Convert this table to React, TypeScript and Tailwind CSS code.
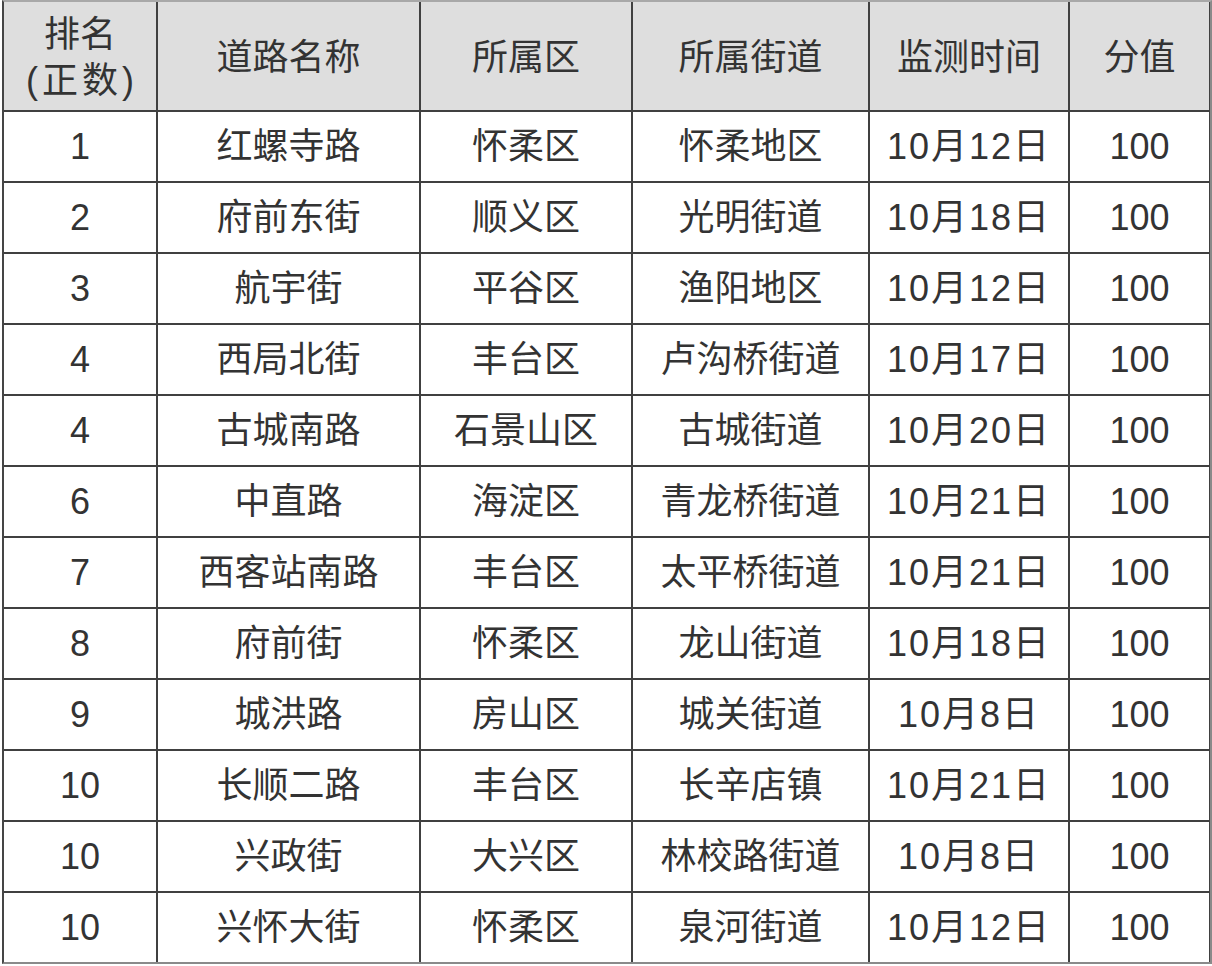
import React from "react";

const rows: string[][] = [
  ["1", "红螺寺路", "怀柔区", "怀柔地区", "10月12日", "100"],
  ["2", "府前东街", "顺义区", "光明街道", "10月18日", "100"],
  ["3", "航宇街", "平谷区", "渔阳地区", "10月12日", "100"],
  ["4", "西局北街", "丰台区", "卢沟桥街道", "10月17日", "100"],
  ["4", "古城南路", "石景山区", "古城街道", "10月20日", "100"],
  ["6", "中直路", "海淀区", "青龙桥街道", "10月21日", "100"],
  ["7", "西客站南路", "丰台区", "太平桥街道", "10月21日", "100"],
  ["8", "府前街", "怀柔区", "龙山街道", "10月18日", "100"],
  ["9", "城洪路", "房山区", "城关街道", "10月8日", "100"],
  ["10", "长顺二路", "丰台区", "长辛店镇", "10月21日", "100"],
  ["10", "兴政街", "大兴区", "林校路街道", "10月8日", "100"],
  ["10", "兴怀大街", "怀柔区", "泉河街道", "10月12日", "100"],
];

const headers = ["道路名称", "所属区", "所属街道", "监测时间", "分值"];

export default function App() {
  return (
    <div
      className="w-[1212px] h-[966px] bg-white pl-[2px] overflow-hidden"
      style={{ fontFamily: '"Liberation Sans", "Noto Sans CJK SC", sans-serif' }}
    >
      <div className="w-[1210px] border-t-2 border-t-[#a8a8a8] border-l-2 border-l-[#454545] border-r-2 border-r-[#8a8a8a] border-b-2 border-b-[#8a8a8a] bg-[#404040]">
        <div className="grid grid-cols-[152px_261px_210px_235px_198px_139px] grid-rows-[108px_repeat(12,69px)] gap-[2px] text-[36px] text-[#333333] leading-none">
          <div className="bg-[#dedede] flex flex-col items-center justify-center leading-[46px] pt-[4px]">
            <span>排名</span>
            <span className="tracking-[4px] pl-[4px]">(正数)</span>
          </div>
          {headers.map((h) => (
            <div key={h} className="bg-[#dedede] flex items-center justify-center pt-[4px]">
              {h}
            </div>
          ))}
          {rows.map((r, i) =>
            r.map((c, j) => (
              <div
                key={i + "-" + j}
                className={
                  "bg-white flex items-center justify-center " +
                  (j === 4 ? "tracking-[2px]" : "")
                }
              >
                {c}
              </div>
            ))
          )}
        </div>
      </div>
    </div>
  );
}
